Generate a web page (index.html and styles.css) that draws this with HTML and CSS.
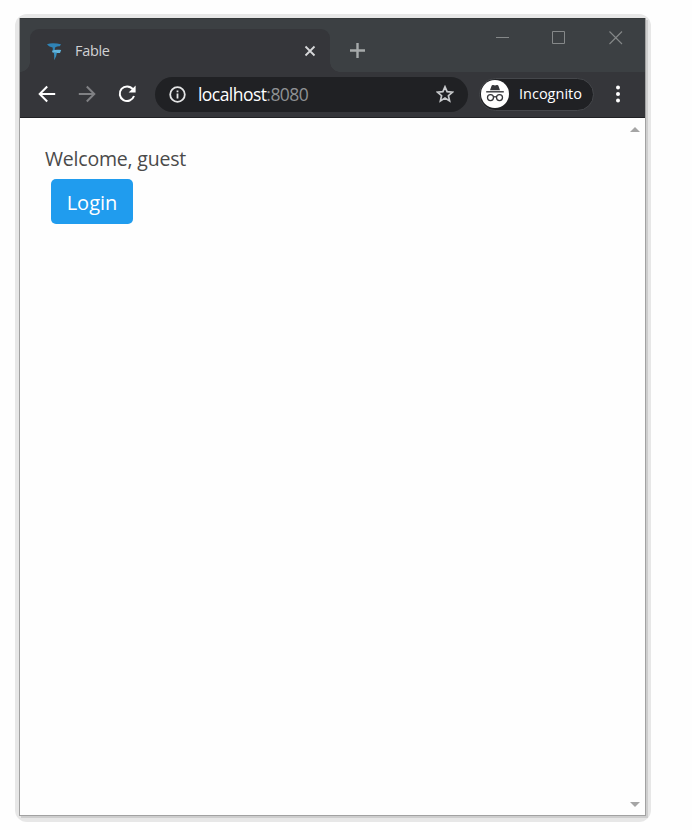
FILE: index.html
```html
<!DOCTYPE html>
<html lang="en">
<head>
<meta charset="utf-8">
<title>Fable</title>
<link rel="stylesheet" href="styles.css">
</head>
<body>
<div class="shadow">
<div class="window">
  <header class="titlebar">
    <div class="tab">
      <svg class="favicon" width="16" height="18" viewBox="0 0 16 18"><path d="M0 1.2C4-.2 9 .1 14 1.3L12.8 3.2C9.4 3 8 4 7.5 5.5L5.6 4.6C3.5 4 1.5 3 0 1.2Z" fill="#2f83b5"/><path d="M5.6 4.2L8 4L7.8 8L6 9Z" fill="#2f83b5"/><path d="M5 7.8C8 6.4 11 6.9 14.2 7L13 10H8.4L5.5 9.6Z" fill="#62b4dc"/><path d="M6.8 9.5H9.9L9.2 13L7.2 17.2V12.3Z" fill="#3790bf"/></svg>
      <span class="tab-title">Fable</span>
      <svg class="tab-close" width="12" height="12" viewBox="0 0 12 12"><path d="M1.5 1.5l9 9m0-9l-9 9" stroke="#d7d8da" stroke-width="1.8"/></svg>
    </div>
    <svg class="new-tab" width="15" height="15" viewBox="0 0 15 15"><path d="M0 7.5h15M7.5 0v15" stroke="#a6aaab" stroke-width="2.4"/></svg>
    <div class="controls">
      <svg width="14" height="14" viewBox="0 0 14 14"><path d="M0 6.5h13" stroke="#858889"/></svg>
      <svg width="14" height="14" viewBox="0 0 14 14"><path d="M.5.5h12v12H.5z" fill="none" stroke="#858889"/></svg>
      <svg class="close" width="14" height="14" viewBox="0 0 14 14"><path d="M.5.5l12.5 12.5M13 .5L.5 13" stroke="#858889" stroke-width="1.1"/></svg>
    </div>
  </header>
  <nav class="toolbar">
    <svg class="nav" width="18" height="18" viewBox="0 0 18 18"><path d="M17.2 9H2M9.2 1.5L1.7 9l7.5 7.5" fill="none" stroke="#fff" stroke-width="2"/></svg>
    <svg class="nav" width="18" height="18" viewBox="0 0 18 18"><path d="M.8 9H16M8.8 1.5L16.3 9l-7.5 7.5" fill="none" stroke="#808184" stroke-width="2"/></svg>
    <svg class="nav" width="18" height="18" viewBox="0 0 18 18"><path d="M14.8 4.2A7.3 7.3 0 1 0 16 11" fill="none" stroke="#fff" stroke-width="2"/><path d="M17.6.5v7h-7z" fill="#fff"/></svg>
    <div class="omnibox">
      <svg width="17" height="17" viewBox="0 0 17 17"><circle cx="8.5" cy="8.5" r="7.3" fill="none" stroke="#e4e5e6" stroke-width="1.8"/><path d="M8.5 7.6v5M8.5 4.4v1.8" stroke="#e4e5e6" stroke-width="1.8"/></svg>
      <span class="url">localhost<span class="port">:8080</span></span>
      <svg class="star" width="18" height="18" viewBox="0 0 18 18"><path d="M9 1.8l2.1 4.9 5.3.5-4 3.5 1.2 5.2L9 13.1l-4.6 2.8 1.2-5.2-4-3.5 5.3-.5z" fill="none" stroke="#c8cacc" stroke-width="1.7"/></svg>
    </div>
    <div class="incognito">
      <svg width="28" height="28" viewBox="0 0 28 28"><circle cx="14" cy="14" r="14" fill="#fff"/><path d="M9 10.2l1.6-4.4c.3-.8.8-1 1.6-.8l1.8.4 1.8-.4c.8-.2 1.3 0 1.6.8L19 10.2z" fill="#35363a"/><path d="M5.2 11.8h17.6" stroke="#35363a" stroke-width="1.4"/><g fill="none" stroke="#35363a" stroke-width="1.3"><circle cx="9.5" cy="17.6" r="3"/><circle cx="18.5" cy="17.6" r="3"/><path d="M12.4 17.2q1.6-1 3.2 0"/></g></svg>
      <span>Incognito</span>
    </div>
    <svg class="menu" width="4" height="18" viewBox="0 0 4 18"><g fill="#fff"><circle cx="2" cy="2.5" r="2"/><circle cx="2" cy="9" r="2"/><circle cx="2" cy="15.5" r="2"/></g></svg>
  </nav>
  <main class="page">
    <div class="content">
      <p class="welcome">Welcome, guest</p>
      <button class="login">Login</button>
    </div>
    <div class="scrollbar">
      <svg width="10" height="5" viewBox="0 0 10 5"><path d="M0 5L5 0l5 5z" fill="#a5a5a5"/></svg>
      <svg width="10" height="5" viewBox="0 0 10 5"><path d="M0 0l5 5 5-5z" fill="#a5a5a5"/></svg>
    </div>
  </main>
</div>
</div>
</body>
</html>
```
FILE: styles.css
```css
* { box-sizing: border-box; }
body {
  margin: 0;
  height: 830px;
  padding: 14px 41px 8px 15px;
  background: #fefefe;
  font-family: "Open Sans", "Noto Sans", sans-serif;
}
svg { display: block; flex: none; }
.shadow {
  height: 808px;
  padding: 4px 5px 6px 4px;
  border-radius: 12px;
  background: #e7e7e7;
}
.window {
  height: 798px;
  display: flex;
  flex-direction: column;
  border: 1px solid #a2a2a2;
  border-top: 0;
  background: #fefefe;
  box-shadow: 2px 2px 0 #cecece;
}
.titlebar {
  height: 54px;
  flex: none;
  display: flex;
  align-items: flex-start;
  padding-left: 10px;
  background: #3c4043;
  border-top: 1px solid #343839;
}
.tab {
  position: relative;
  width: 300px;
  height: 43px;
  margin-top: 10px;
  padding: 0 14px 0 17px;
  display: flex;
  align-items: center;
  border-radius: 9px 9px 0 0;
  background: #35363a;
}
.tab::before, .tab::after {
  content: "";
  position: absolute;
  bottom: 0;
  width: 10px;
  height: 10px;
}
.tab::before { left: -10px; background: radial-gradient(circle at 0 0, transparent 9.5px, #35363a 10px); }
.tab::after { right: -10px; background: radial-gradient(circle at 100% 0, transparent 9.5px, #35363a 10px); }
.favicon { margin: 2px 12px 0 0; }
.tab-title {
  color: #d0d1d3;
  font-size: 14.5px;
  letter-spacing: -0.3px;
}
.tab-close { margin-left: auto; }
.new-tab { margin: 24px 0 0 20px; }
.controls {
  display: flex;
  gap: 42px;
  margin: 12px 22px 0 auto;
}
.close { margin-left: 1px; }
.toolbar {
  height: 46px;
  flex: none;
  display: flex;
  align-items: center;
  padding: 0 25.5px 1px 18px;
  background: #35363a;
  border-bottom: 1px solid #202124;
}
.nav { margin-right: 22px; }
.omnibox {
  width: 313px;
  height: 35px;
  margin-left: -3px;
  display: flex;
  align-items: center;
  padding: 0 14px;
  border-radius: 18px;
  background: #202124;
}
.url {
  margin-left: 12px;
  color: #fff;
  font-size: 17.5px;
  letter-spacing: -0.55px;
  white-space: nowrap;
}
.port { color: #8f9194; }
.star { margin-left: auto; }
.incognito {
  width: 115px;
  height: 33px;
  margin-left: 11px;
  padding-left: 1px;
  display: flex;
  align-items: center;
  border: 1px solid #45474b;
  border-radius: 17px;
  background: #202124;
  color: #fff;
  font-size: 14.5px;
}
.incognito span { margin: -2px 0 0 10px; }
.menu { margin-left: auto; }
.page {
  flex: 1;
  display: flex;
  justify-content: space-between;
}
.content { padding: 26px 0 0 25px; }
.welcome {
  margin: 0;
  color: #4a4a4a;
  font-size: 19.5px;
  letter-spacing: -0.2px;
  line-height: 30px;
}
.login {
  display: block;
  width: 82px;
  height: 45px;
  margin: 5px 0 0 6px;
  padding: 2px 0 0;
  border: 0;
  border-radius: 5px;
  background: #209cee;
  color: #fff;
  font: 20px "Open Sans", "Noto Sans", sans-serif;
}
.scrollbar {
  display: flex;
  flex-direction: column;
  justify-content: space-between;
  padding: 9px 5.5px 8px 0;
}
```
